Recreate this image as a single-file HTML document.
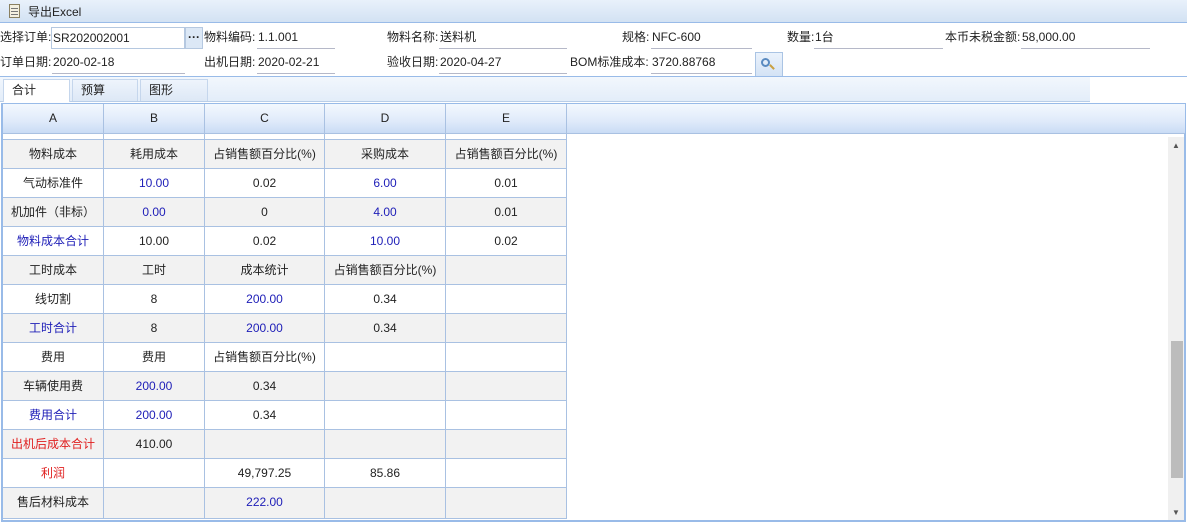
<!DOCTYPE html><html><head><meta charset="utf-8"><style>
*{box-sizing:border-box;margin:0;padding:0}
body{width:1187px;height:529px;overflow:hidden;background:#fff;font-family:"Liberation Sans","Noto Sans CJK SC",sans-serif;font-size:12px;color:#222;position:relative}
.a{position:absolute;white-space:nowrap}
.tb{left:0;top:0;width:1187px;height:23px;background:linear-gradient(#e9f1fb,#d3e2f3);border-bottom:1px solid #99bbe8}
.lbl{height:20px;line-height:20px}
.inp{height:22px;line-height:20px;border-bottom:1px solid #b5b8c8;padding-left:1px}
.tab{top:79px;height:22px;line-height:20px;padding-left:8px;border:1px solid #c5d6ec;border-bottom:none;background:linear-gradient(#eef4fc,#dde8f6)}
.cell{position:absolute;text-align:center;line-height:28px;border-right:1px solid #a9c1e2;border-bottom:1px solid #a9c1e2}
.b{color:#2020b8}.r{color:#e02020}
</style></head><body>
<div class="a tb"></div>
<div class="a" style="left:9px;top:4px;width:11px;height:14px;background:#f4f0e0;border:1px solid #8a8060"></div>
<div class="a" style="left:11px;top:8px;width:7px;height:1px;background:#777;box-shadow:0 3px #777,0 6px #777"></div>
<div class="a" style="left:28px;top:4px;line-height:16px">导出Excel</div>

<div class="a lbl" style="left:0;top:27px">选择订单:</div>
<div class="a inp" style="left:51px;top:27px;width:134px;border:1px solid #b5c8e0;background:#fff">SR202002001</div>
<div class="a" style="left:185px;top:27px;width:18px;height:22px;background:#dce8f6;border:1px solid #b5c8e0;text-align:center;line-height:18px;font-weight:bold">···</div>
<div class="a lbl" style="left:204px;top:27px">物料编码:</div>
<div class="a inp" style="left:257px;top:27px;width:78px">1.1.001</div>
<div class="a lbl" style="left:387px;top:27px">物料名称:</div>
<div class="a inp" style="left:439px;top:27px;width:128px">送料机</div>
<div class="a lbl" style="left:622px;top:27px">规格:</div>
<div class="a inp" style="left:651px;top:27px;width:101px">NFC-600</div>
<div class="a lbl" style="left:787px;top:27px">数量:</div>
<div class="a inp" style="left:814px;top:27px;width:129px">1台</div>
<div class="a lbl" style="left:945px;top:27px">本币未税金额:</div>
<div class="a inp" style="left:1021px;top:27px;width:129px">58,000.00</div>

<div class="a lbl" style="left:0;top:52px">订单日期:</div>
<div class="a inp" style="left:52px;top:52px;width:133px">2020-02-18</div>
<div class="a lbl" style="left:204px;top:52px">出机日期:</div>
<div class="a inp" style="left:257px;top:52px;width:78px">2020-02-21</div>
<div class="a lbl" style="left:387px;top:52px">验收日期:</div>
<div class="a inp" style="left:439px;top:52px;width:128px">2020-04-27</div>
<div class="a lbl" style="left:570px;top:52px">BOM标准成本:</div>
<div class="a inp" style="left:651px;top:52px;width:101px">3720.88768</div>
<div class="a" style="left:755px;top:52px;width:28px;height:25px;background:linear-gradient(#eaf2fc,#d4e3f5);border:1px solid #aac4e4"></div>
<div class="a" style="left:761px;top:58px;width:9px;height:9px;border:2px solid #5a8ac0;border-radius:50%"></div>
<div class="a" style="left:769px;top:66px;width:6px;height:2px;background:#c9a040;transform:rotate(45deg)"></div>

<div class="a" style="left:0;top:76px;width:1187px;height:1px;background:#99bbe8"></div>
<div class="a" style="left:0;top:77px;width:1090px;height:25px;background:linear-gradient(#f2f7fd,#e3edf9);border-bottom:1px solid #b8cde8"></div>
<div class="a tab" style="left:3px;width:67px;background:#fff;height:23px">合计</div>
<div class="a tab" style="left:72px;width:66px">预算</div>
<div class="a tab" style="left:140px;width:68px">图形</div>

<div class="a" style="left:1px;top:103px;width:1185px;height:419px;border:2px solid #99bbe8;border-top:1px solid #99bbe8"></div>
<div class="a" style="left:3px;top:104px;width:1182px;height:30px;background:linear-gradient(#f3f8fe 0%,#dfeafa 60%,#c9dcf5 100%);border-bottom:1px solid #a9c1e2"></div>
<div class="a" style="left:1168px;top:137px;width:16px;height:383px;background:#f0f0f0"></div>
<div class="a" style="left:1171px;top:341px;width:12px;height:137px;background:#bcbcbc"></div>
<div class="a" style="left:1172px;top:141px;font-size:8px;color:#555">▲</div>
<div class="a" style="left:1172px;top:508px;font-size:8px;color:#555">▼</div>
<div id="g"></div>
<script>
var xs=[3,104,205,325,446,567];
var h='';var H=['A','B','C','D','E'];
for(var i=0;i<5;i++)h+='<div class="cell" style="left:'+xs[i]+'px;top:104px;width:'+(xs[i+1]-xs[i])+'px;height:30px;line-height:29px;border-bottom:none">'+H[i]+'</div>';
for(var i=0;i<5;i++)h+='<div class="cell" style="left:'+xs[i]+'px;top:134px;width:'+(xs[i+1]-xs[i])+'px;height:6px"></div>';
var R=[
['物料成本','耗用成本','占销售额百分比(%)','采购成本','占销售额百分比(%)'],
['气动标准件','b10.00','0.02','b6.00','0.01'],
['机加件（非标）','b0.00','0','b4.00','0.01'],
['b物料成本合计','10.00','0.02','b10.00','0.02'],
['工时成本','工时','成本统计','占销售额百分比(%)',''],
['线切割','8','b200.00','0.34',''],
['b工时合计','8','b200.00','0.34',''],
['费用','费用','占销售额百分比(%)','',''],
['车辆使用费','b200.00','0.34','',''],
['b费用合计','b200.00','0.34','',''],
['r出机后成本合计','410.00','','',''],
['r利润','','49,797.25','85.86',''],
['售后材料成本','','b222.00','','']];
for(var r=0;r<13;r++){var t=140+29*r;var bg=r%2==0?'#f2f2f2':'#fff';
for(var c=0;c<5;c++){var v=R[r][c],cl='';if(v[0]=='b'||v[0]=='r'){cl=v[0];v=v.slice(1);}
var hh=r==12?31:29;
h+='<div class="cell '+cl+'" style="left:'+xs[c]+'px;top:'+t+'px;width:'+(xs[c+1]-xs[c])+'px;height:'+hh+'px;background:'+bg+'">'+v+'</div>';}}
document.getElementById('g').innerHTML=h;
</script>
</body></html>
